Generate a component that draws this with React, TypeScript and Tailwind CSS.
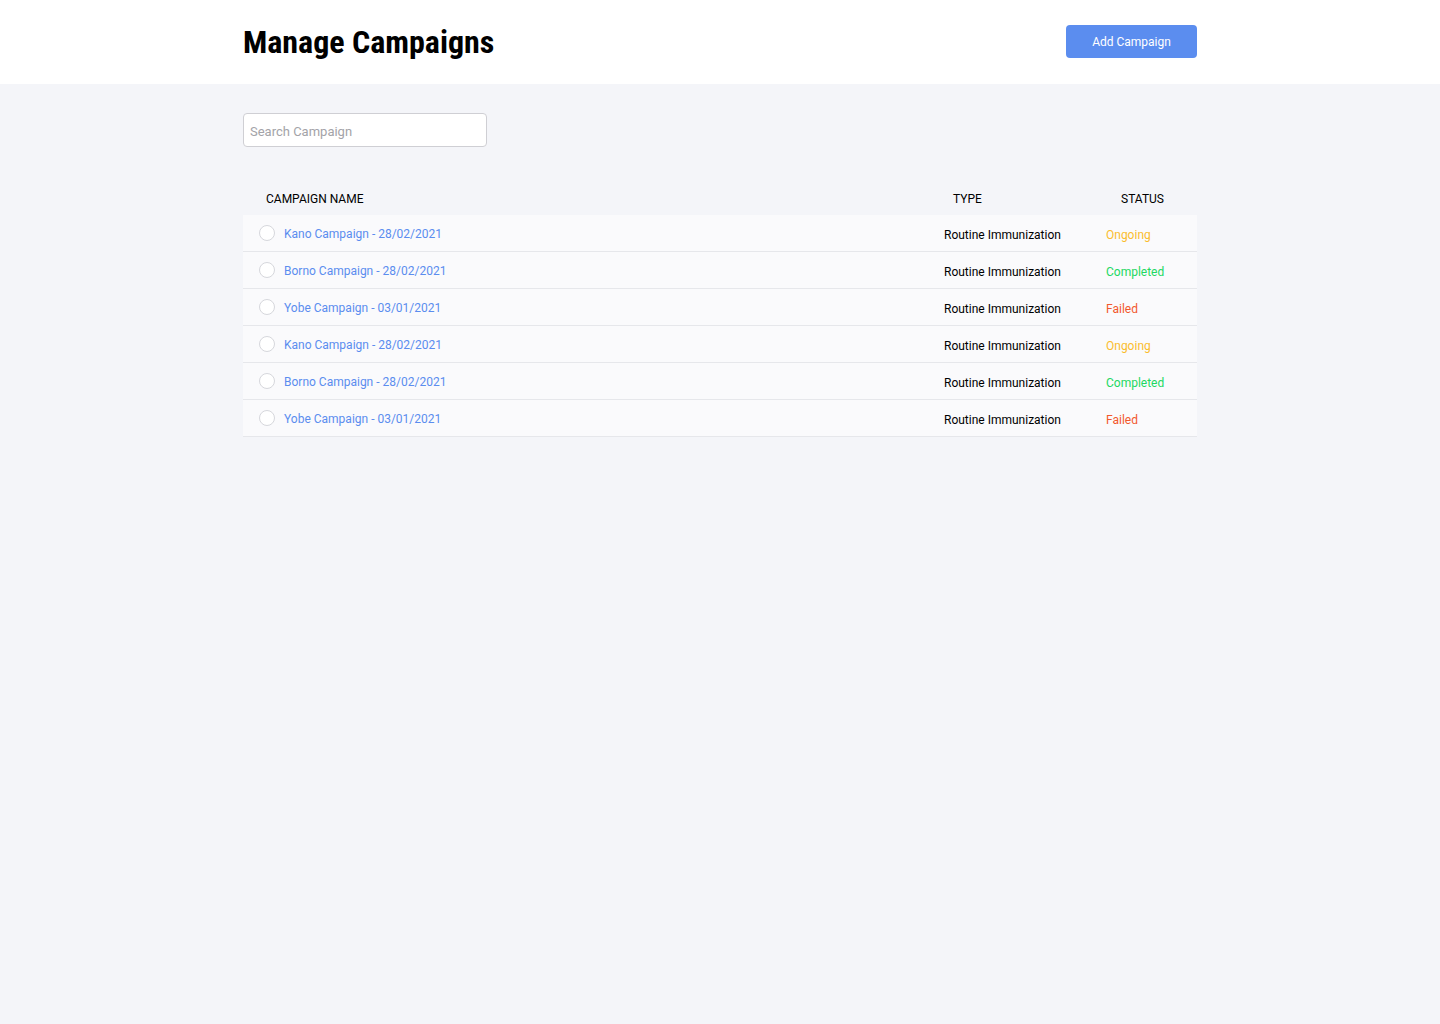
import React from 'react'

const campaigns = [
  { name: 'Kano Campaign - 28/02/2021', type: 'Routine Immunization', status: 'Ongoing' },
  { name: 'Borno Campaign - 28/02/2021', type: 'Routine Immunization', status: 'Completed' },
  { name: 'Yobe Campaign - 03/01/2021', type: 'Routine Immunization', status: 'Failed' },
  { name: 'Kano Campaign - 28/02/2021', type: 'Routine Immunization', status: 'Ongoing' },
  { name: 'Borno Campaign - 28/02/2021', type: 'Routine Immunization', status: 'Completed' },
  { name: 'Yobe Campaign - 03/01/2021', type: 'Routine Immunization', status: 'Failed' },
]

const statusColor: Record<string, string> = {
  Ongoing: 'text-[#fbbd2e]',
  Completed: 'text-[#22d862]',
  Failed: 'text-[#f2582c]',
}

export default function App() {
  return (
    <div className="min-h-screen bg-[#f4f5f9] font-['Roboto',sans-serif]">
      {/* Header */}
      <div className="bg-white">
        <div className="mx-auto flex h-[84px] w-[954px] items-center justify-between">
          <h1 className="font-['Roboto_Condensed','Liberation_Sans_Narrow','Roboto',sans-serif] text-[32px] font-bold text-black">
            Manage Campaigns
          </h1>
          <button className="mb-[2px] h-[33px] w-[131px] rounded-[4px] bg-[#5b8def] pt-[2px] text-[12px] text-white">
            Add Campaign
          </button>
        </div>
      </div>

      <div className="mx-auto w-[954px] pt-[29px]">
        {/* Search */}
        <input
          placeholder="Search Campaign"
          className="h-[34px] w-[244px] rounded-[4px] border border-[#cfcfd4] bg-white px-[6px] pt-[2px] text-[13px] text-gray-700 outline-none placeholder:text-[#a3a3a8]"
        />

        {/* Table */}
        <div className="mt-[38px]">
          <div className="flex h-[30px] items-center pb-[2px] text-[12px] text-black">
            <div className="flex-1 pl-[23px]">CAMPAIGN NAME</div>
            <div className="w-[162px] pl-[9px]">TYPE</div>
            <div className="w-[91px] pl-[15px]">STATUS</div>
          </div>
          {campaigns.map((c, i) => (
            <div
              key={i}
              className="flex h-[37px] items-center border-b border-[#e6e7eb] bg-[#fafafc] text-[12px]"
            >
              <div className="flex flex-1 items-center pl-[16px]">
                <span className="mr-[9px] h-[16px] w-[16px] rounded-full border border-[#d6d7dc] bg-white" />
                <span className="pt-[2px] text-[#5b8def]">{c.name}</span>
              </div>
              <div className="w-[162px] pt-[4px] text-black">{c.type}</div>
              <div className={`w-[91px] pt-[4px] ${statusColor[c.status]}`}>{c.status}</div>
            </div>
          ))}
        </div>
      </div>
    </div>
  )
}
